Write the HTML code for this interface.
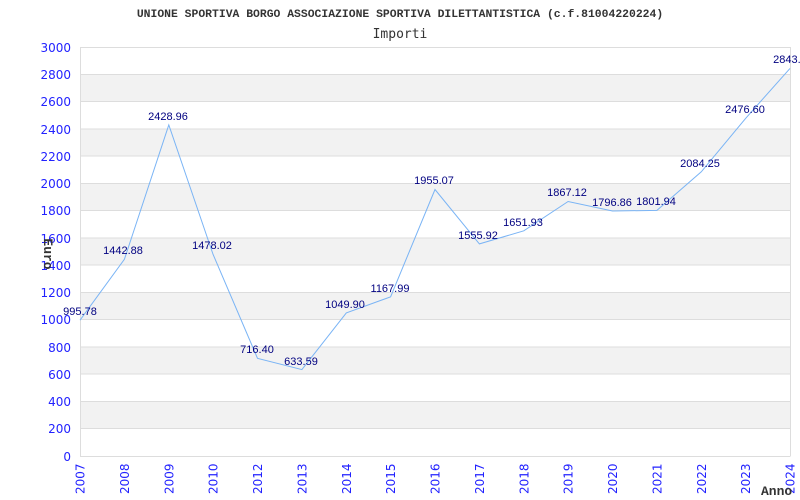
<!DOCTYPE html>
<html><head><style>body{margin:0;background:#fff}svg{display:block}</style></head><body>
<svg width="800" height="500" xmlns="http://www.w3.org/2000/svg">
<rect width="800" height="500" fill="#fff"/>
<text x="400" y="17" text-anchor="middle" font-family="Liberation Mono, monospace" font-weight="bold" font-size="11.4" fill="#333">UNIONE SPORTIVA BORGO ASSOCIAZIONE SPORTIVA DILETTANTISTICA (c.f.81004220224)</text>
<text x="400" y="38" text-anchor="middle" font-family="DejaVu Sans Mono, monospace" font-size="13" fill="#333">Importi</text>
<g fill="#f2f2f2">
<rect x="80" y="74.3" width="710" height="27.3"/>
<rect x="80" y="128.8" width="710" height="27.3"/>
<rect x="80" y="183.3" width="710" height="27.3"/>
<rect x="80" y="237.9" width="710" height="27.3"/>
<rect x="80" y="292.4" width="710" height="27.3"/>
<rect x="80" y="346.9" width="710" height="27.3"/>
<rect x="80" y="401.5" width="710" height="27.3"/>
</g>
<g stroke="#ddd" stroke-width="1">
<line x1="80" y1="47.5" x2="790" y2="47.5"/><line x1="80" y1="74.5" x2="790" y2="74.5"/><line x1="80" y1="101.5" x2="790" y2="101.5"/><line x1="80" y1="129" x2="790" y2="129"/><line x1="80" y1="156" x2="790" y2="156"/><line x1="80" y1="183.5" x2="790" y2="183.5"/><line x1="80" y1="210.5" x2="790" y2="210.5"/><line x1="80" y1="238" x2="790" y2="238"/><line x1="80" y1="265" x2="790" y2="265"/><line x1="80" y1="292.5" x2="790" y2="292.5"/><line x1="80" y1="319.5" x2="790" y2="319.5"/><line x1="80" y1="347" x2="790" y2="347"/><line x1="80" y1="374" x2="790" y2="374"/><line x1="80" y1="401.5" x2="790" y2="401.5"/><line x1="80" y1="428.5" x2="790" y2="428.5"/>
<line x1="80.5" y1="47" x2="80.5" y2="456.5"/><line x1="790.5" y1="47" x2="790.5" y2="456.5"/><line x1="80" y1="456.5" x2="790" y2="456.5"/>
</g>
<g font-family="DejaVu Sans, sans-serif" font-size="12" fill="#22f" text-anchor="end">
<text x="71" y="52">3000</text><text x="71" y="79">2800</text><text x="71" y="106">2600</text><text x="71" y="134">2400</text><text x="71" y="161">2200</text><text x="71" y="188">2000</text><text x="71" y="215">1800</text><text x="71" y="243">1600</text><text x="71" y="270">1400</text><text x="71" y="297">1200</text><text x="71" y="324">1000</text><text x="71" y="352">800</text><text x="71" y="379">600</text><text x="71" y="406">400</text><text x="71" y="433">200</text><text x="71" y="461">0</text>
</g>
<g font-family="DejaVu Sans, sans-serif" font-size="12" fill="#22f">
<text transform="translate(84.5,494) rotate(-90)">2007</text>
<text transform="translate(128.9,494) rotate(-90)">2008</text>
<text transform="translate(173.3,494) rotate(-90)">2009</text>
<text transform="translate(217.6,494) rotate(-90)">2010</text>
<text transform="translate(262,494) rotate(-90)">2012</text>
<text transform="translate(306.4,494) rotate(-90)">2013</text>
<text transform="translate(350.8,494) rotate(-90)">2014</text>
<text transform="translate(395.1,494) rotate(-90)">2015</text>
<text transform="translate(439.5,494) rotate(-90)">2016</text>
<text transform="translate(483.9,494) rotate(-90)">2017</text>
<text transform="translate(528.3,494) rotate(-90)">2018</text>
<text transform="translate(572.6,494) rotate(-90)">2019</text>
<text transform="translate(617,494) rotate(-90)">2020</text>
<text transform="translate(661.4,494) rotate(-90)">2021</text>
<text transform="translate(705.8,494) rotate(-90)">2022</text>
<text transform="translate(750.1,494) rotate(-90)">2023</text>
<text transform="translate(794.5,494) rotate(-90)">2024</text>
</g>
<polyline fill="none" stroke="#7ab4f5" stroke-width="1" points="80,320.2 124.4,259.3 168.8,124.9 213.1,254.5 257.5,358.3 301.9,369.6 346.3,312.9 390.6,296.8 435,189.5 479.4,243.9 523.8,230.8 568.1,201.5 612.5,211 656.9,210.4 701.3,171.8 745.6,118.4 790,68.4"/>
<g font-family="Liberation Sans, sans-serif" font-size="11" fill="#000080" text-anchor="middle">
<text x="80" y="315">995.78</text>
<text x="123" y="254">1442.88</text>
<text x="168" y="120">2428.96</text>
<text x="212" y="249">1478.02</text>
<text x="257" y="353">716.40</text>
<text x="301" y="365">633.59</text>
<text x="345" y="308">1049.90</text>
<text x="390" y="292">1167.99</text>
<text x="434" y="184">1955.07</text>
<text x="478" y="239">1555.92</text>
<text x="523" y="226">1651.93</text>
<text x="567" y="196">1867.12</text>
<text x="612" y="206">1796.86</text>
<text x="656" y="205">1801.94</text>
<text x="700" y="167">2084.25</text>
<text x="745" y="113">2476.60</text>
<text x="790" y="63">2843.2</text>
</g>
<text transform="translate(44,254) rotate(90)" text-anchor="middle" font-family="Liberation Mono, monospace" font-weight="bold" font-size="13" fill="#333">Euro</text>
<text x="761" y="495" font-family="Liberation Mono, monospace" font-weight="bold" font-size="13" fill="#333">Anno</text>
</svg>
</body></html>
